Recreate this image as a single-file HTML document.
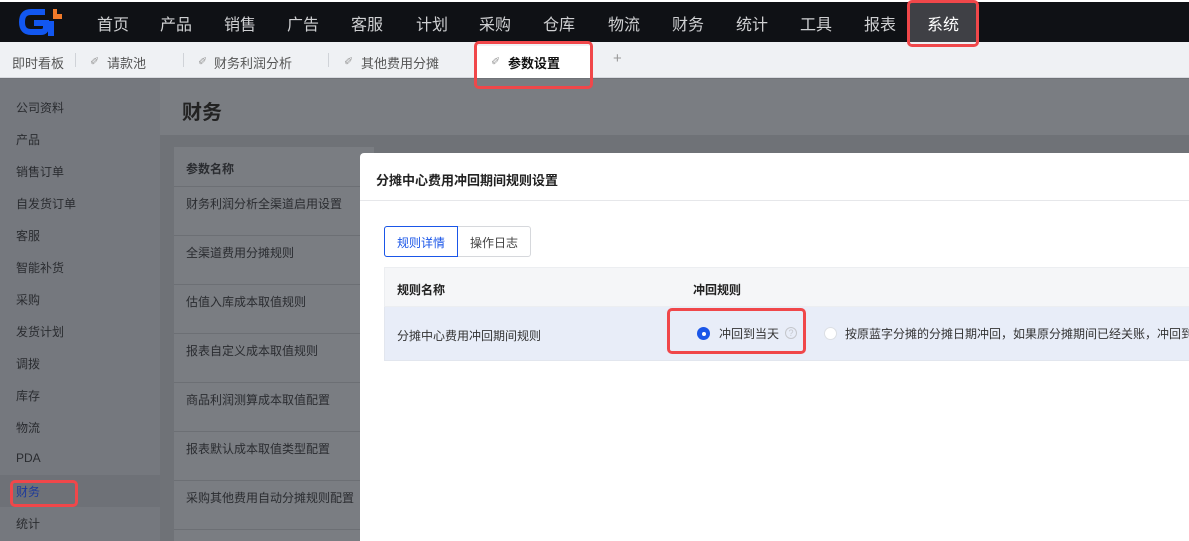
<!DOCTYPE html>
<html><head><meta charset="utf-8">
<style>
*{margin:0;padding:0;box-sizing:border-box}
body{width:1189px;height:541px;overflow:hidden;position:relative;font-family:"Liberation Sans","Noto Sans CJK SC",sans-serif;background:#6f7277}
.abs{position:absolute;white-space:nowrap}
#top{position:absolute;left:0;top:2px;width:1189px;height:40px;background:#0f1115}
.nav{position:absolute;top:11px;font-size:16px;color:#cfd0d2}
#tabs{position:absolute;left:0;top:42px;width:1189px;height:36px;background:#eff1f4;border-bottom:1px solid #d8dadf}
.tab{position:absolute;top:11px;font-size:13px;color:#555}
.sep{position:absolute;top:11px;width:1px;height:14px;background:#d0d3d8}
.pin{position:absolute;top:13px;font-size:11px;color:#999}
.red{position:absolute;border:3px solid #f0474a;border-radius:5px}
#side{position:absolute;left:0;top:79px;width:160px;height:462px;background:#75787e}
.si{position:absolute;left:16px;font-size:12px;color:#2a2c30}
.pr{position:absolute;left:186px;font-size:12px;color:#2a2c30}
.rl{position:absolute;left:174px;width:186px;height:1px;background:#6c6f74}
</style></head><body>
<div style="position:absolute;left:0;top:0;width:1189px;height:2px;background:#fff"></div>
<div id="top">
<svg style="position:absolute;left:17px;top:4px" width="48" height="32" viewBox="0 0 48 32">
<path d="M28 6 H14 Q5 6 5 16 Q5 26 14 26 H24 Q29 26 29 21 V17 H17" fill="none" stroke="#1257f0" stroke-width="6"/>
<path d="M34 15 V30" stroke="#1257f0" stroke-width="6"/>
<path d="M36 3 H40 V8 H45 V13 H36 Z" fill="#f07a2a"/>
</svg>
</div>
<div class="nav abs" style="left:97px">首页</div>
<div class="nav abs" style="left:160px">产品</div>
<div class="nav abs" style="left:224px">销售</div>
<div class="nav abs" style="left:287px">广告</div>
<div class="nav abs" style="left:351px">客服</div>
<div class="nav abs" style="left:416px">计划</div>
<div class="nav abs" style="left:479px">采购</div>
<div class="nav abs" style="left:543px">仓库</div>
<div class="nav abs" style="left:608px">物流</div>
<div class="nav abs" style="left:672px">财务</div>
<div class="nav abs" style="left:736px">统计</div>
<div class="nav abs" style="left:800px">工具</div>
<div class="nav abs" style="left:864px">报表</div>
<div style="position:absolute;left:910px;top:2px;width:66px;height:40px;background:#3f4045"></div>
<div class="nav abs" style="left:927px;color:#fff">系统</div>

<div id="tabs">
<div class="tab abs" style="left:12px">即时看板</div>
<div class="sep" style="left:75px"></div>
<div class="pin abs" style="left:90px">✐</div>
<div class="tab abs" style="left:107px">请款池</div>
<div class="sep" style="left:183px"></div>
<div class="pin abs" style="left:198px">✐</div>
<div class="tab abs" style="left:214px">财务利润分析</div>
<div class="sep" style="left:328px"></div>
<div class="pin abs" style="left:344px">✐</div>
<div class="tab abs" style="left:361px">其他费用分摊</div>
<div style="position:absolute;left:477px;top:4px;width:113px;height:32px;background:#fff"></div>
<div class="pin abs" style="left:491px">✐</div>
<div class="tab abs" style="left:508px;color:#111;font-weight:bold">参数设置</div>
<div class="tab abs" style="left:613px;color:#999;font-size:15px;top:8px">+</div>
</div>

<div id="side"></div>
<div class="si abs" style="top:99px">公司资料</div>
<div class="si abs" style="top:131px">产品</div>
<div class="si abs" style="top:163px">销售订单</div>
<div class="si abs" style="top:195px">自发货订单</div>
<div class="si abs" style="top:227px">客服</div>
<div class="si abs" style="top:259px">智能补货</div>
<div class="si abs" style="top:291px">采购</div>
<div class="si abs" style="top:323px">发货计划</div>
<div class="si abs" style="top:355px">调拨</div>
<div class="si abs" style="top:387px">库存</div>
<div class="si abs" style="top:419px">物流</div>
<div class="si abs" style="top:451px">PDA</div>
<div style="position:absolute;left:0;top:475px;width:160px;height:32px;background:#6e7177"></div>
<div class="si abs" style="top:483px;color:#1d3a9a">财务</div>
<div class="si abs" style="top:515px">统计</div>

<div style="position:absolute;left:160px;top:79px;width:1029px;height:56px;background:#7a7d82"></div>
<div class="abs" style="left:182px;top:96px;font-size:20px;font-weight:bold;color:#222">财务</div>
<div style="position:absolute;left:174px;top:147px;width:200px;height:394px;background:#7a7d82"></div>
<div class="pr abs" style="top:160px;font-weight:bold">参数名称</div>
<div class="rl" style="top:186px"></div>
<div class="pr abs" style="top:195px">财务利润分析全渠道启用设置</div>
<div class="rl" style="top:235px"></div>
<div class="pr abs" style="top:244px">全渠道费用分摊规则</div>
<div class="rl" style="top:284px"></div>
<div class="pr abs" style="top:293px">估值入库成本取值规则</div>
<div class="rl" style="top:333px"></div>
<div class="pr abs" style="top:342px">报表自定义成本取值规则</div>
<div class="rl" style="top:382px"></div>
<div class="pr abs" style="top:391px">商品利润测算成本取值配置</div>
<div class="rl" style="top:431px"></div>
<div class="pr abs" style="top:440px">报表默认成本取值类型配置</div>
<div class="rl" style="top:480px"></div>
<div class="pr abs" style="top:489px">采购其他费用自动分摊规则配置</div>
<div class="rl" style="top:529px"></div>

<div style="position:absolute;left:360px;top:153px;width:829px;height:388px;background:#fff;border-radius:4px 0 0 0"></div>
<div class="abs" style="left:376px;top:170px;font-size:13px;font-weight:bold;color:#222">分摊中心费用冲回期间规则设置</div>
<div style="position:absolute;left:360px;top:200px;width:829px;height:1px;background:#e6e7ea"></div>
<div style="position:absolute;left:384px;top:226px;width:147px;height:31px;border:1px solid #d6d8dc;border-radius:3px"></div>
<div style="position:absolute;left:384px;top:226px;width:74px;height:31px;border:1px solid #1a56e8;border-radius:3px 0 0 3px"></div>
<div class="abs" style="left:397px;top:234px;font-size:12px;color:#1a56e8">规则详情</div>
<div class="abs" style="left:470px;top:234px;font-size:12px;color:#444">操作日志</div>
<div style="position:absolute;left:384px;top:267px;width:805px;height:40px;background:#f5f6f8;border:1px solid #eceef1;border-right:none"></div>
<div class="abs" style="left:397px;top:281px;font-size:12px;font-weight:bold;color:#222">规则名称</div>
<div class="abs" style="left:693px;top:281px;font-size:12px;font-weight:bold;color:#222">冲回规则</div>
<div style="position:absolute;left:384px;top:307px;width:805px;height:54px;background:#e8edf8;border:1px solid #e2e6ee;border-top:none;border-right:none"></div>
<div class="abs" style="left:397px;top:327px;font-size:12px;color:#333">分摊中心费用冲回期间规则</div>
<div style="position:absolute;left:697px;top:327px;width:13px;height:13px;border-radius:50%;background:#1a56e8"></div>
<div style="position:absolute;left:701.5px;top:331.5px;width:4px;height:4px;border-radius:50%;background:#fff"></div>
<div class="abs" style="left:719px;top:325px;font-size:12px;color:#333">冲回到当天</div>
<div class="abs" style="left:785px;top:327px;width:12px;height:12px;border:1px solid #c5c7cc;border-radius:50%;font-size:9px;color:#c5c7cc;text-align:center;line-height:10px">?</div>
<div style="position:absolute;left:824px;top:327px;width:13px;height:13px;border-radius:50%;background:#fff;border:1px solid #dcdfe4"></div>
<div class="abs" style="left:845px;top:325px;font-size:12px;color:#333">按原蓝字分摊的分摊日期冲回，如果原分摊期间已经关账，冲回到</div>

<div class="red" style="left:907px;top:0;width:72px;height:47px"></div>
<div class="red" style="left:474px;top:41px;width:119px;height:48px"></div>
<div class="red" style="left:10px;top:480px;width:68px;height:27px"></div>
<div class="red" style="left:667px;top:308px;width:139px;height:46px"></div>
</body></html>
